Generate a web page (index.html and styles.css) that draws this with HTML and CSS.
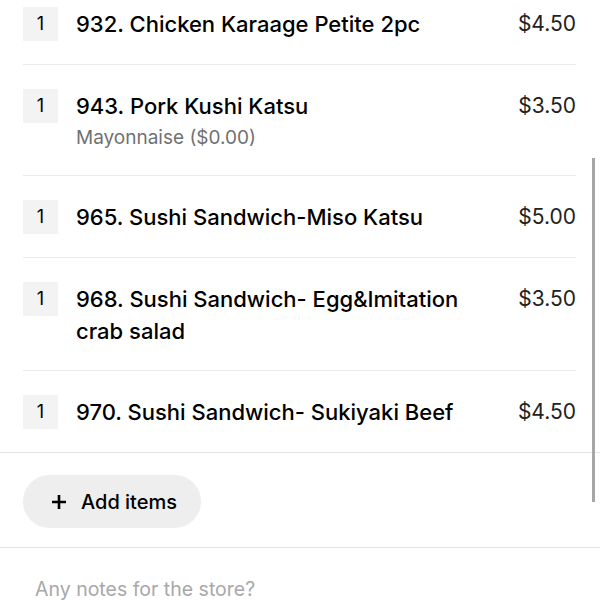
FILE: index.html
```html
<!DOCTYPE html>
<html>
<head>
    <title>Cart</title>
    <link rel="stylesheet" href="styles.css">
</head>
<body>
    <div class="page">
        <div class="items">
            <div class="item">
                <div class="qty">1</div>
                <div class="info">
                    <div class="name">932. Chicken Karaage Petite 2pc</div>
                </div>
                <div class="price">$4.50</div>
            </div>
            <div class="item">
                <div class="qty">1</div>
                <div class="info">
                    <div class="name">943. Pork Kushi Katsu</div>
                    <div class="option">Mayonnaise ($0.00)</div>
                </div>
                <div class="price">$3.50</div>
            </div>
            <div class="item">
                <div class="qty">1</div>
                <div class="info">
                    <div class="name">965. Sushi Sandwich-Miso Katsu</div>
                </div>
                <div class="price">$5.00</div>
            </div>
            <div class="item">
                <div class="qty">1</div>
                <div class="info">
                    <div class="name">968. Sushi Sandwich- Egg&amp;Imitation crab salad</div>
                </div>
                <div class="price">$3.50</div>
            </div>
            <div class="item">
                <div class="qty">1</div>
                <div class="info">
                    <div class="name">970. Sushi Sandwich- Sukiyaki Beef</div>
                </div>
                <div class="price">$4.50</div>
            </div>
        </div>

        <div class="add-row">
            <button class="add-btn" type="button">
                <svg class="plus" width="14" height="14" viewBox="0 0 14 14">
                    <path d="M7 0v14M0 7h14" stroke="#000" stroke-width="2.6"/>
                </svg>
                Add items
            </button>
        </div>

        <div class="notes">Any notes for the store?</div>

        <div class="scrollbar"></div>
    </div>
</body>
</html>
```

FILE: styles.css
```css
body {
    margin: 0;
    background: #fff;
    font-family: Inter, "Noto Sans", sans-serif;
    color: #000;
}
.page {
    position: relative;
    width: 600px;
    height: 600px;
    overflow: hidden;
}
.items {
    margin-top: -17px;
    border-bottom: 1px solid #e2e2e2;
}
.item {
    display: flex;
    align-items: flex-start;
    margin: 0 24px 0 23px;
    padding: 24px 0 23px;
    border-bottom: 1px solid #ebebeb;
}
.item:last-child {
    border-bottom: none;
}
.qty {
    width: 35px;
    height: 34px;
    flex-shrink: 0;
    background: #f3f3f3;
    font-size: 18px;
    line-height: 34px;
    text-align: center;
    margin-right: 18px;
}
.info {
    flex: 1;
    padding-top: 1px;
}
.name {
    font-size: 22px;
    font-weight: 500;
    line-height: 32px;
}
.option {
    font-size: 19px;
    color: #717171;
    line-height: 28px;
    padding-top: 2px;
}
.price {
    font-size: 21px;
    line-height: 32px;
    padding-top: 1px;
    color: #222;
    margin-left: 24px;
}
.add-row {
    padding: 22px 23px 19px;
    border-bottom: 1px solid #e2e2e2;
}
.add-btn {
    display: flex;
    align-items: center;
    height: 53px;
    padding: 0 24px 0 29px;
    border: none;
    border-radius: 27px;
    background: #eeeeee;
    font-family: inherit;
    font-size: 20px;
    font-weight: 500;
    color: #000;
}
.plus {
    margin-right: 15px;
}
.notes {
    padding: 29px 35px 0;
    font-size: 19.5px;
    line-height: 24px;
    color: #a8a8a8;
}
.scrollbar {
    position: absolute;
    right: 5px;
    top: 158px;
    width: 3px;
    height: 344px;
    background: #a6a6a6;
}
```
